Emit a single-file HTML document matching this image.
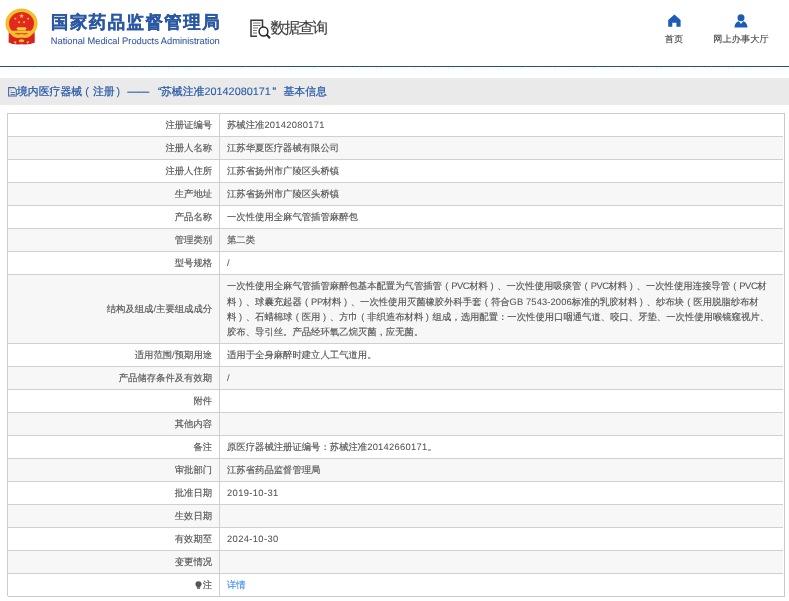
<!DOCTYPE html>
<html><head><meta charset="utf-8"><style>
html,body{margin:0;padding:0;width:789px;height:601px;overflow:hidden;background:#fff;font-family:"Liberation Sans",sans-serif;text-rendering:geometricPrecision}
.abs{position:absolute}
#w{position:absolute;left:0;top:0;width:789px;height:601px;will-change:transform}
.emb{position:absolute;left:0;top:0}
.t1{position:absolute;left:51px;top:11px;font-size:17.4px;line-height:22px;font-weight:bold;color:#2b58a3;white-space:nowrap;letter-spacing:1.5px;-webkit-text-stroke:0.3px #2b58a3}
.t2{position:absolute;left:50.8px;top:35.8px;font-size:9.3px;line-height:11px;color:#3a5ca2;-webkit-text-stroke:0.1px #3a5ca2;white-space:nowrap}
.dq{position:absolute;left:250px;top:19px}
.dqt{position:absolute;left:270.5px;top:18.6px;font-size:15.6px;line-height:19px;color:#3d3d3d;-webkit-text-stroke:0.15px #3d3d3d;white-space:nowrap;letter-spacing:-1.6px}
.nav{position:absolute;font-size:9.2px;line-height:12px;color:#444;-webkit-text-stroke:0.1px #444;white-space:nowrap}
.blue-line{position:absolute;left:0;top:66px;width:789px;height:1.3px;background:#244f80}
.hatch{position:absolute;left:0;top:67px;width:789px;height:3px;background:repeating-linear-gradient(135deg,#f3f6f9 0 1px,#fff 1px 3px)}
.bar{position:absolute;left:0;top:78px;width:789px;height:26.7px;background:#eaeaea}
.bc{position:absolute;top:85px;font-size:10.85px;line-height:14px;color:#2a5aa8;-webkit-text-stroke:0.25px #2a5aa8;white-space:nowrap}
.bci{position:absolute;left:7px;top:86px}
.row{position:absolute;left:7.5px;width:775px;}
.hl{position:absolute;left:7.5px;width:775px;height:1px;background:#d0d0d0}
.lab{position:absolute;left:0;width:204.6px;top:1.2px;bottom:-1.2px;display:flex;align-items:center;justify-content:flex-end;font-size:9.36px;line-height:15.4px;letter-spacing:0;color:#555;-webkit-text-stroke:0.15px #555;white-space:nowrap}
.val{position:absolute;left:219.5px;top:1.2px;bottom:-1.2px;display:flex;align-items:center;font-size:9.36px;line-height:15.4px;letter-spacing:0;color:#555;-webkit-text-stroke:0.15px #555;white-space:nowrap}
.ml{line-height:15.4px}
.a{letter-spacing:0.25px;-webkit-text-stroke:0.05px #555}
.lp{padding-left:3.3px;padding-right:2.94px;-webkit-text-stroke:0.05px #555}
.rp{padding-left:2.6px;padding-right:3.64px;-webkit-text-stroke:0.05px #555}
.lnk{color:#3b8de6;-webkit-text-stroke:0.1px #3b8de6}
.bulb{margin-right:1px;position:relative;top:-1px}
.vl{position:absolute;left:219px;width:1px;background:#d0d0d0}
.frame{position:absolute;left:7px;top:113px;width:776px;border:1px solid #cfcfcf}
</style></head><body><div id="w">
<svg class="emb" width="45" height="50" viewBox="0 0 45 50">
<path d="M8.8 31 L34.6 31 L34.8 42.5 Q30 45 21.5 44.3 Q13 45 8.6 42.5 Z" fill="#d9231c"/>
<ellipse cx="21.5" cy="23.4" rx="14.3" ry="13.1" fill="#e3291d"/><path d="M12.6 33.6 A14.3 13.1 0 1 1 30.4 33.6 Q27.5 37.2 21.5 35.8 Q15.5 37.2 12.6 33.6" fill="none" stroke="#f2bf2c" stroke-width="3.6" stroke-linejoin="round"/>
<path d="M21.6 13.4l0.6 1.75h1.85l-1.5 1.1 0.57 1.75-1.52-1.08-1.52 1.08 0.57-1.75-1.5-1.1h1.85z" fill="#f7d25a"/>
<circle cx="15.4" cy="18.6" r="0.95" fill="#f5cf62"/><circle cx="28.2" cy="18.6" r="0.95" fill="#f5cf62"/>
<circle cx="19.1" cy="22.2" r="0.95" fill="#f5cf62"/><circle cx="24.1" cy="22.2" r="0.95" fill="#f5cf62"/>
<path d="M17.5 27.3 L25.6 27.3 L26.8 29 L25.8 29 L25.8 30.6 L17.3 30.6 L17.3 29 L16.3 29 Z" fill="#f8cc3c"/>
<path d="M11.8 30.8 L31 30.8 L30 33.3 L12.8 33.3 Z" fill="#f6c534"/>

<ellipse cx="21.5" cy="40.8" rx="2.8" ry="1.5" fill="#f5c533"/>
<path d="M13.6 41.2 L16.5 41.8 L15.5 44 Z M29.4 41.2 L26.5 41.8 L27.5 44 Z" fill="#f5d070"/>
</svg>
<div class="t1">国家药品监督管理局</div>
<div class="t2">National Medical Products Administration</div>
<svg class="dq" width="22" height="21" viewBox="0 0 22 21">
<path d="M12.5 10.5 V1.2 H1 V17.2 H7" fill="none" stroke="#3a3a3a" stroke-width="1.5"/>
<path d="M3 4h7.5M3 6.5h7.5M3 9h5M3 11.5h4M3 14h4" stroke="#777" stroke-width="1"/>
<circle cx="13.5" cy="12.5" r="4.4" fill="#fff" stroke="#2a2a2a" stroke-width="1.5"/>
<path d="M16.5 15.5 L20 19.2" stroke="#2a2a2a" stroke-width="2"/>
</svg>
<div class="dqt">数据查询</div>
<svg class="abs" style="left:667px;top:14px" width="14" height="14" viewBox="0 0 14 14"><path d="M7.4 0.6 L13.6 5.9 V12.7 H9.4 V8.7 H5.3 V12.7 H1.2 V5.9 Z" fill="#1c5cb6"/></svg>
<div class="nav" style="left:664.8px;top:32.5px;letter-spacing:0px">首页</div>
<svg class="abs" style="left:733.9px;top:14px" width="14" height="14" viewBox="0 0 14 14"><circle cx="7" cy="3.8" r="3.5" fill="#1c5cb6"/><path d="M0.5 13.5 C0.8 9.5 3 7.6 5 7.3 L7 10 L9 7.3 C11 7.6 13.2 9.5 13.5 13.5 Z" fill="#1c5cb6"/></svg>
<div class="nav" style="left:713.3px;top:32.5px;letter-spacing:0.04px">网上办事大厅</div>
<div class="blue-line"></div>
<div class="hatch"></div>
<div class="bar"></div>
<svg class="bci" width="11" height="11" viewBox="0 0 11 11"><path d="M1.6 1.6 H7.3 L9.3 3.6 V10 H1.6 Z" fill="none" stroke="#45679f" stroke-width="1.05"/><path d="M3.6 4.4h1M3.5 6.5h4.5M3.5 8.5h4.5" stroke="#45679f" stroke-width="0.9"/></svg>
<div class="bc" style="left:17px;letter-spacing:0px">境内医疗器械<span style="padding-left:3.2px;padding-right:4.04px;-webkit-text-stroke:0.05px #2a5aa8">(</span>注册<span style="padding-left:1.85px;padding-right:5.39px;-webkit-text-stroke:0.05px #2a5aa8">)</span></div>
<div class="bc" style="left:127.5px;letter-spacing:0px">——</div>
<div class="bc" style="left:158px">“</div>
<div class="bc" style="left:161px;letter-spacing:0px">苏械注准</div>
<div class="bc" style="left:204.5px;-webkit-text-stroke:0.08px #2a5aa8">20142080171</div>
<div class="bc" style="left:272.5px">”</div>
<div class="bc" style="left:283.5px;letter-spacing:0px">基本信息</div>
<div class="row" style="top:113.40px;height:23.00px;background:#fff"><div class="lab">注册证编号</div><div class="val">苏械注准<span class="a" style="letter-spacing:0.28px">20142080171</span></div></div>
<div class="hl" style="top:112.90px;width:777px;background:#cdcdcd"></div>
<div class="row" style="top:136.40px;height:23.00px;background:#f7f7f7"><div class="lab">注册人名称</div><div class="val">江苏华夏医疗器械有限公司</div></div>
<div class="hl" style="top:135.90px"></div>
<div class="row" style="top:159.40px;height:23.00px;background:#fff"><div class="lab">注册人住所</div><div class="val">江苏省扬州市广陵区头桥镇</div></div>
<div class="hl" style="top:158.90px"></div>
<div class="row" style="top:182.40px;height:23.00px;background:#f7f7f7"><div class="lab">生产地址</div><div class="val">江苏省扬州市广陵区头桥镇</div></div>
<div class="hl" style="top:181.90px"></div>
<div class="row" style="top:205.40px;height:23.00px;background:#fff"><div class="lab">产品名称</div><div class="val">一次性使用全麻气管插管麻醉包</div></div>
<div class="hl" style="top:204.90px"></div>
<div class="row" style="top:228.40px;height:23.00px;background:#f7f7f7"><div class="lab">管理类别</div><div class="val">第二类</div></div>
<div class="hl" style="top:227.90px"></div>
<div class="row" style="top:251.40px;height:23.00px;background:#fff"><div class="lab">型号规格</div><div class="val"><span class="a" style="letter-spacing:0px">/</span></div></div>
<div class="hl" style="top:250.90px"></div>
<div class="row" style="top:274.40px;height:69.00px;background:#f7f7f7"><div class="lab">结构及组成<span class="a" style="letter-spacing:0px">/</span>主要组成成分</div><div class="val"><div class="ml">一次性使用全麻气管插管麻醉包基本配置为气管插管<span class="lp">(</span><span class="a" style="letter-spacing:-0.45px">PVC</span>材料<span class="rp">)</span>、一次性使用吸痰管<span class="lp">(</span><span class="a" style="letter-spacing:-0.45px">PVC</span>材料<span class="rp">)</span>、一次性使用连接导管<span class="lp">(</span><span class="a" style="letter-spacing:-0.45px">PVC</span>材<br>料<span class="rp">)</span>、球囊充起器<span class="lp">(</span><span class="a" style="letter-spacing:-0.45px">PP</span>材料<span class="rp">)</span>、一次性使用灭菌橡胶外科手套<span class="lp">(</span>符合<span class="a" style="letter-spacing:0.12px">GB 7543-2006</span>标准的乳胶材料<span class="rp">)</span>、纱布块<span class="lp">(</span>医用脱脂纱布材<br>料<span class="rp">)</span>、石蜡棉球<span class="lp">(</span>医用<span class="rp">)</span>、方巾<span class="lp">(</span>非织造布材料<span class="rp">)</span>组成，选用配置：一次性使用口咽通气道、咬口、牙垫、一次性使用喉镜窥视片、<br>胶布、导引丝。产品经环氧乙烷灭菌，应无菌。</div></div></div>
<div class="hl" style="top:273.90px"></div>
<div class="row" style="top:343.40px;height:23.00px;background:#fff"><div class="lab">适用范围<span class="a" style="letter-spacing:0px">/</span>预期用途</div><div class="val">适用于全身麻醉时建立人工气道用。</div></div>
<div class="hl" style="top:342.90px"></div>
<div class="row" style="top:366.40px;height:23.00px;background:#f7f7f7"><div class="lab">产品储存条件及有效期</div><div class="val"><span class="a" style="letter-spacing:0px">/</span></div></div>
<div class="hl" style="top:365.90px"></div>
<div class="row" style="top:389.40px;height:23.00px;background:#fff"><div class="lab">附件</div><div class="val"></div></div>
<div class="hl" style="top:388.90px"></div>
<div class="row" style="top:412.40px;height:23.00px;background:#f7f7f7"><div class="lab">其他内容</div><div class="val"></div></div>
<div class="hl" style="top:411.90px"></div>
<div class="row" style="top:435.40px;height:23.00px;background:#fff"><div class="lab">备注</div><div class="val">原医疗器械注册证编号：苏械注准<span class="a" style="letter-spacing:0.28px">20142660171</span>。</div></div>
<div class="hl" style="top:434.90px"></div>
<div class="row" style="top:458.40px;height:23.00px;background:#f7f7f7"><div class="lab">审批部门</div><div class="val">江苏省药品监督管理局</div></div>
<div class="hl" style="top:457.90px"></div>
<div class="row" style="top:481.40px;height:23.00px;background:#fff"><div class="lab">批准日期</div><div class="val"><span class="a" style="letter-spacing:0.38px">2019-10-31</span></div></div>
<div class="hl" style="top:480.90px"></div>
<div class="row" style="top:504.40px;height:23.00px;background:#f7f7f7"><div class="lab">生效日期</div><div class="val"></div></div>
<div class="hl" style="top:503.90px"></div>
<div class="row" style="top:527.40px;height:23.00px;background:#fff"><div class="lab">有效期至</div><div class="val"><span class="a" style="letter-spacing:0.38px">2024-10-30</span></div></div>
<div class="hl" style="top:526.90px"></div>
<div class="row" style="top:550.40px;height:23.00px;background:#f7f7f7"><div class="lab">变更情况</div><div class="val"></div></div>
<div class="hl" style="top:549.90px"></div>
<div class="row" style="top:573.40px;height:23.00px;background:#fff"><div class="lab"><svg class="bulb" width="7" height="8" viewBox="0 0 7 8"><path d="M3.5 0.2C1.6 0.2 0.4 1.5 0.4 3.1c0 1.2 0.8 1.9 1.3 2.6l0.2 1h3.2l0.2-1c0.5-0.7 1.3-1.4 1.3-2.6C6.6 1.5 5.4 0.2 3.5 0.2z" fill="#555"/><rect x="2" y="7" width="3" height="1" fill="#777"/></svg>注</div><div class="val"><span class="lnk">详情</span></div></div>
<div class="hl" style="top:572.90px"></div>
<div class="hl" style="top:595.90px;height:1.5px;background:#c9c9c9;width:777.5px"></div>
<div class="vl" style="top:113.40px;height:483.00px"></div>
<div class="abs" style="left:7px;top:113px;width:1px;height:483.40px;background:#cdcdcd"></div>
<div class="abs" style="left:783.6px;top:112.9px;width:1.4px;height:484.00px;background:#c9c9c9"></div>
</div></body></html>
